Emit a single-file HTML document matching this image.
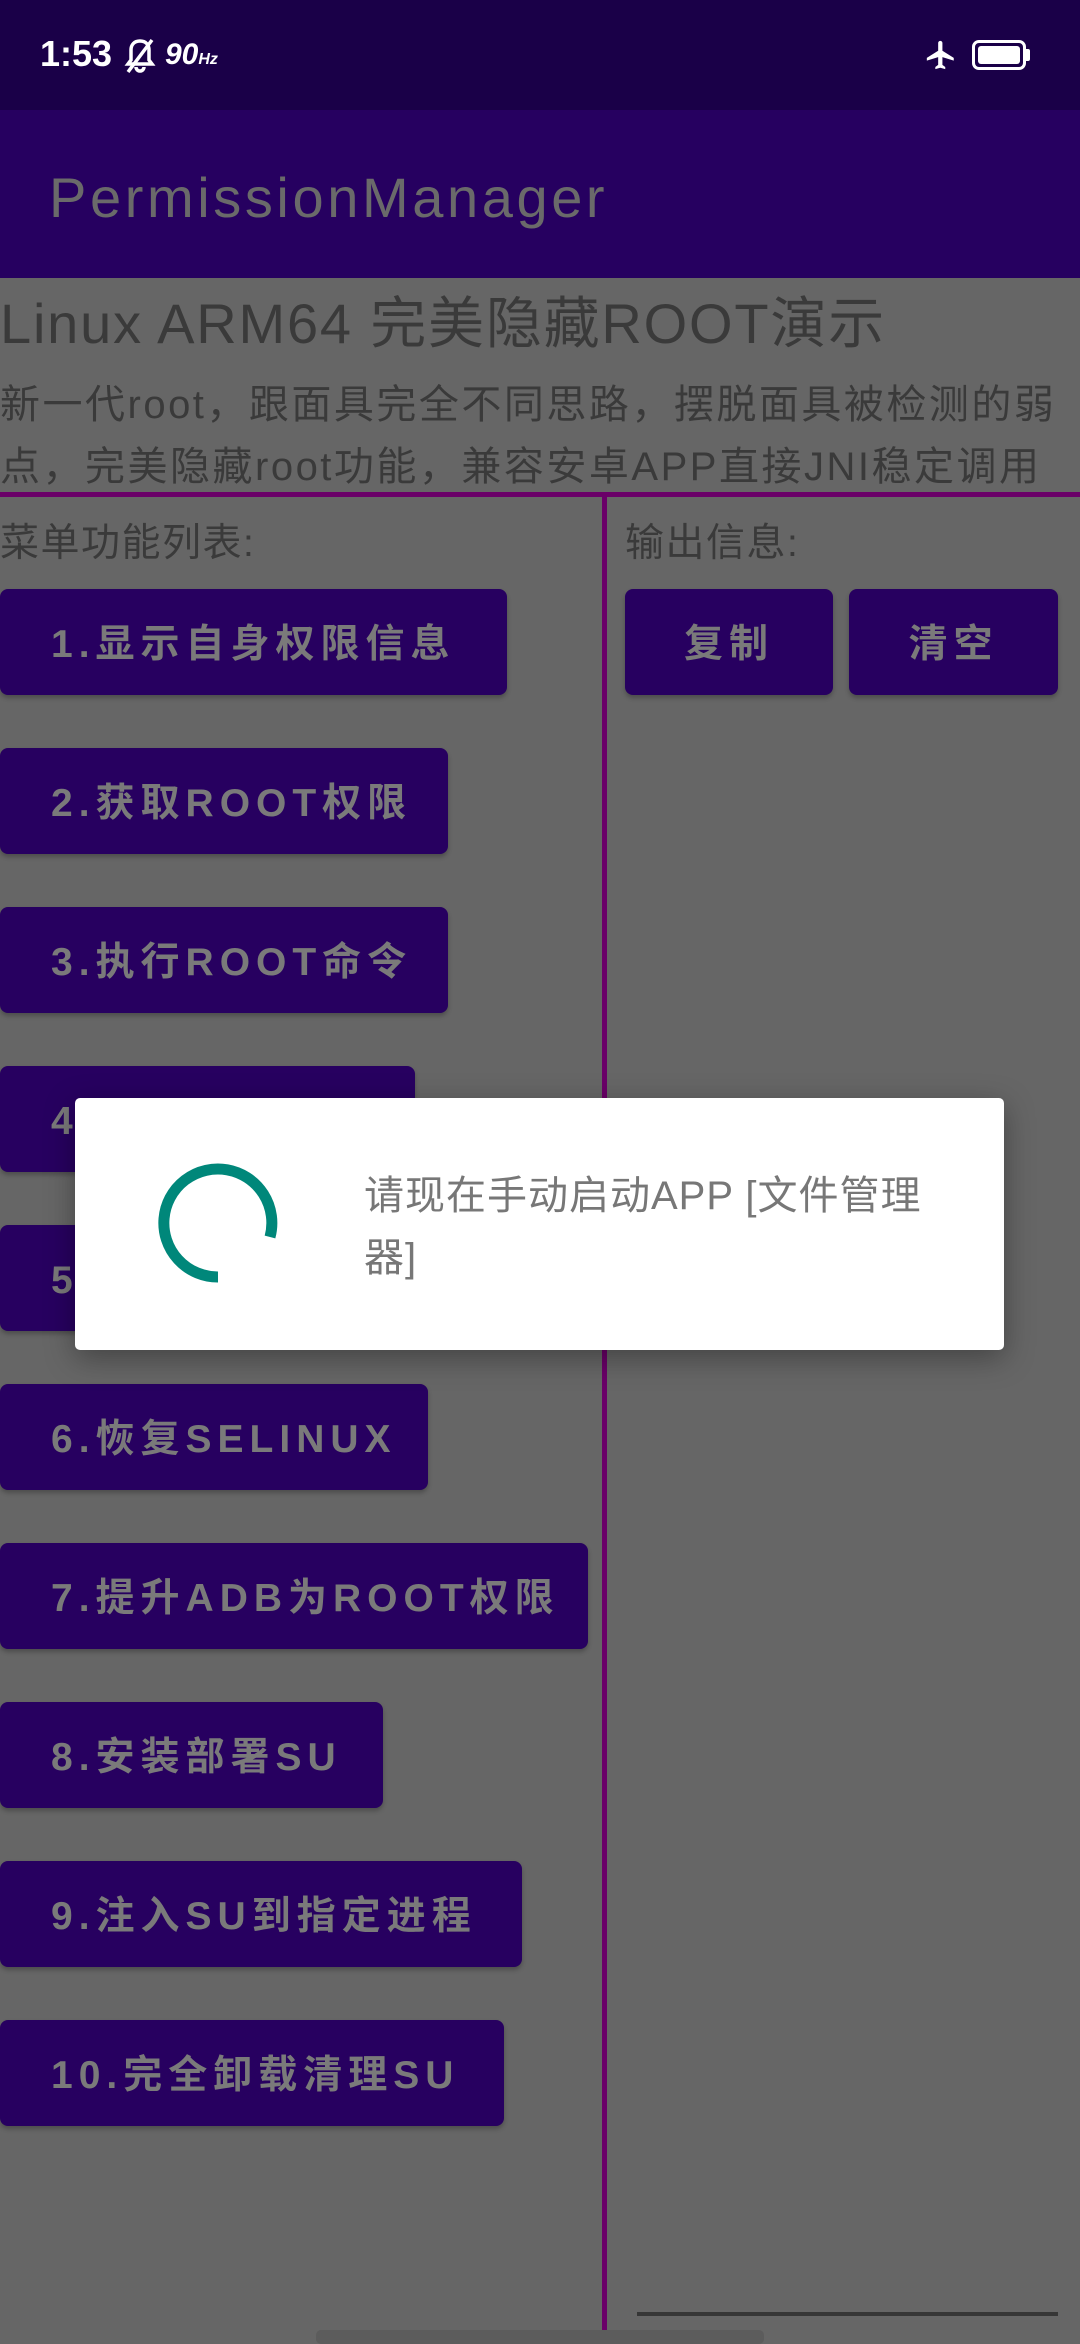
<!DOCTYPE html>
<html><head><meta charset="utf-8"><style>
*{margin:0;padding:0;box-sizing:border-box}
body{width:1080px;height:2340px;background:#666;position:relative;overflow:hidden;font-family:"Liberation Sans","Noto Sans CJK SC",sans-serif}
.abs{position:absolute}
.sb{left:0;top:0;width:1080px;height:110px;background:#1a0048}
.ab{left:0;top:110px;width:1080px;height:168px;background:#260060}
.btn{position:absolute;background:#270060;border-radius:8px;color:#7a7a7a;font-size:39px;font-weight:bold;letter-spacing:6px;line-height:112px;height:106px;padding-left:51px;white-space:nowrap;box-shadow:0 3px 5px rgba(0,0,0,.25);overflow:hidden}
.dk{color:#3a3a3a}
</style></head><body>
<div class="abs sb"></div>
<div class="abs" style="left:40px;top:33px;color:#fff;font-size:36px;font-weight:bold">1:53</div>
<svg class="abs" style="left:124px;top:38px" width="32" height="36" viewBox="0 0 32 36"><path d="M16 3c-6 0-9 4-9 9v10l-3 4h24l-3-4V12c0-5-3-9-9-9zM12 29a4 4 0 0 0 8 0" fill="none" stroke="#fff" stroke-width="3.5"/><path d="M4 34L28 2" stroke="#fff" stroke-width="3.5"/></svg>
<div class="abs" style="left:165px;top:38px;color:#fff;font-size:30px;font-weight:bold;font-style:italic">90<span style="font-size:16px">Hz</span></div>
<svg class="abs" style="left:922px;top:38px" width="38" height="34" viewBox="0 0 24 24"><path d="M21 16v-2l-8-5V3.5a1.5 1.5 0 0 0-3 0V9l-8 5v2l8-2.5V19l-2 1.5V22l3.5-1 3.5 1v-1.5L13 19v-5.5z" fill="#fff"/></svg>
<div class="abs" style="left:972px;top:40px;width:54px;height:30px;border:3px solid #fff;border-radius:7px"><div style="position:absolute;left:3px;top:3px;right:3px;bottom:3px;background:#fff;border-radius:3px"></div></div>
<div class="abs" style="left:1026px;top:49px;width:4px;height:12px;background:#fff;border-radius:0 2px 2px 0"></div>
<div class="abs ab"></div>
<div class="abs" style="left:49px;top:162px;color:#6a6a6a;font-size:56px;line-height:72px;letter-spacing:3.6px">PermissionManager</div>
<div class="abs dk" style="left:0;top:288px;font-size:56px;line-height:72px;white-space:nowrap;letter-spacing:1.8px">Linux ARM64 完美隐藏ROOT演示</div>
<div class="abs dk" style="left:0;top:374px;width:1075px;font-size:40px;line-height:62px;letter-spacing:2.5px">新一代root，跟面具完全不同思路，摆脱面具被检测的弱点，完美隐藏root功能，兼容安卓APP直接JNI稳定调用</div>
<div class="abs" style="left:0;top:492px;width:1080px;height:5px;background:#6a0068"></div>
<div class="abs" style="left:602px;top:495px;width:5px;height:1845px;background:#6a0068"></div>
<div class="abs dk" style="left:0;top:518px;font-size:39px;line-height:52px;letter-spacing:1.5px">菜单功能列表:</div>
<div class="abs dk" style="left:625px;top:518px;font-size:39px;line-height:52px;letter-spacing:1.5px">输出信息:</div>
<div class="btn" style="left:625px;top:589px;width:208px;padding:0;text-align:center">复制</div>
<div class="btn" style="left:849px;top:589px;width:209px;padding:0;text-align:center">清空</div>
<div class="btn" style="left:0;top:589px;width:507px">1.显示自身权限信息</div>
<div class="btn" style="left:0;top:748px;width:448px">2.获取ROOT权限</div>
<div class="btn" style="left:0;top:907px;width:448px">3.执行ROOT命令</div>
<div class="btn" style="left:0;top:1066px;width:415px">4.禁用SELINUX</div>
<div class="btn" style="left:0;top:1225px;width:430px">5.关闭SELINUX</div>
<div class="btn" style="left:0;top:1384px;width:428px">6.恢复SELINUX</div>
<div class="btn" style="left:0;top:1543px;width:588px">7.提升ADB为ROOT权限</div>
<div class="btn" style="left:0;top:1702px;width:383px">8.安装部署SU</div>
<div class="btn" style="left:0;top:1861px;width:522px">9.注入SU到指定进程</div>
<div class="btn" style="left:0;top:2020px;width:504px">10.完全卸载清理SU</div>
<div class="abs" style="left:637px;top:2312px;width:421px;height:4px;background:#363636"></div>
<div class="abs" style="left:316px;top:2330px;width:448px;height:14px;background:#5c5c5c;border-radius:5px"></div>
<div class="abs" style="left:75px;top:1098px;width:929px;height:252px;background:#fff;border-radius:5px;box-shadow:0 8px 30px rgba(0,0,0,.35)"></div>
<svg class="abs" style="left:148px;top:1153px" width="140" height="140" viewBox="0 0 140 140"><path d="M70 124 A54 54 0 1 1 122 84" fill="none" stroke="#00877a" stroke-width="11"/></svg>
<div class="abs" style="left:364px;top:1165px;width:570px;color:#777;font-size:40px;line-height:62px;letter-spacing:1px">请现在手动启动APP [文件管理器]</div>
</body></html>
